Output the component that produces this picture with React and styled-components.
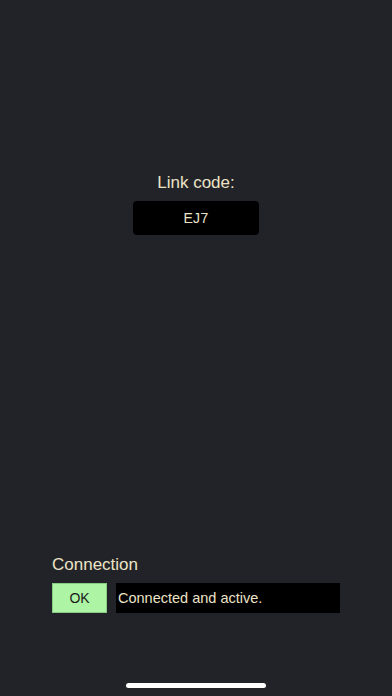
import React from 'react';
import styled, { createGlobalStyle } from 'styled-components';

const GlobalStyle = createGlobalStyle`
  html, body {
    margin: 0;
    padding: 0;
    background: #222328;
  }
  body {
    font-family: "Liberation Sans", Arial, sans-serif;
    -webkit-font-smoothing: antialiased;
  }
`;

const Screen = styled.div`
  display: flex;
  flex-direction: column;
  height: 696px;
  background: #222328;
  color: #ece3c7;
`;

const LinkSection = styled.div`
  display: flex;
  flex-direction: column;
  align-items: center;
  padding-top: 173px;
  gap: 8px;
`;

const Label = styled.div`
  font-size: 17px;
  line-height: 20px;
`;

const CodeBox = styled.div`
  width: 126px;
  height: 34px;
  display: flex;
  align-items: center;
  justify-content: center;
  background: #000;
  border-radius: 4px;
  font-size: 14px;
  letter-spacing: 0.3px;
`;

const Spacer = styled.div`
  flex: 1;
`;

const ConnectionSection = styled.div`
  display: flex;
  flex-direction: column;
  gap: 8px;
  padding: 0 52px;
`;

const StatusRow = styled.div`
  display: flex;
  gap: 9px;
  height: 30px;
`;

const StatusButton = styled.div`
  box-sizing: border-box;
  width: 55px;
  display: flex;
  align-items: center;
  justify-content: center;
  background: ${p => (p.$ok ? '#adf5a4' : '#f5a4a4')};
  border: 1px solid ${p => (p.$ok ? '#8acb83' : '#cb8383')};
  color: #1a1a1a;
  font-size: 14px;
`;

const StatusText = styled.div`
  flex: 1;
  display: flex;
  align-items: center;
  padding-left: 2px;
  background: #000;
  font-size: 14.5px;
`;

const HomeIndicator = styled.div`
  align-self: center;
  width: 140px;
  height: 5px;
  border-radius: 3px;
  background: #fff;
  margin: 70px 0 8px;
`;

export default function App() {
  return (
    <>
      <GlobalStyle />
      <Screen>
        <LinkSection>
          <Label>Link code:</Label>
          <CodeBox>EJ7</CodeBox>
        </LinkSection>
        <Spacer />
        <ConnectionSection>
          <Label>Connection</Label>
          <StatusRow>
            <StatusButton $ok>OK</StatusButton>
            <StatusText>Connected and active.</StatusText>
          </StatusRow>
        </ConnectionSection>
        <HomeIndicator />
      </Screen>
    </>
  );
}
